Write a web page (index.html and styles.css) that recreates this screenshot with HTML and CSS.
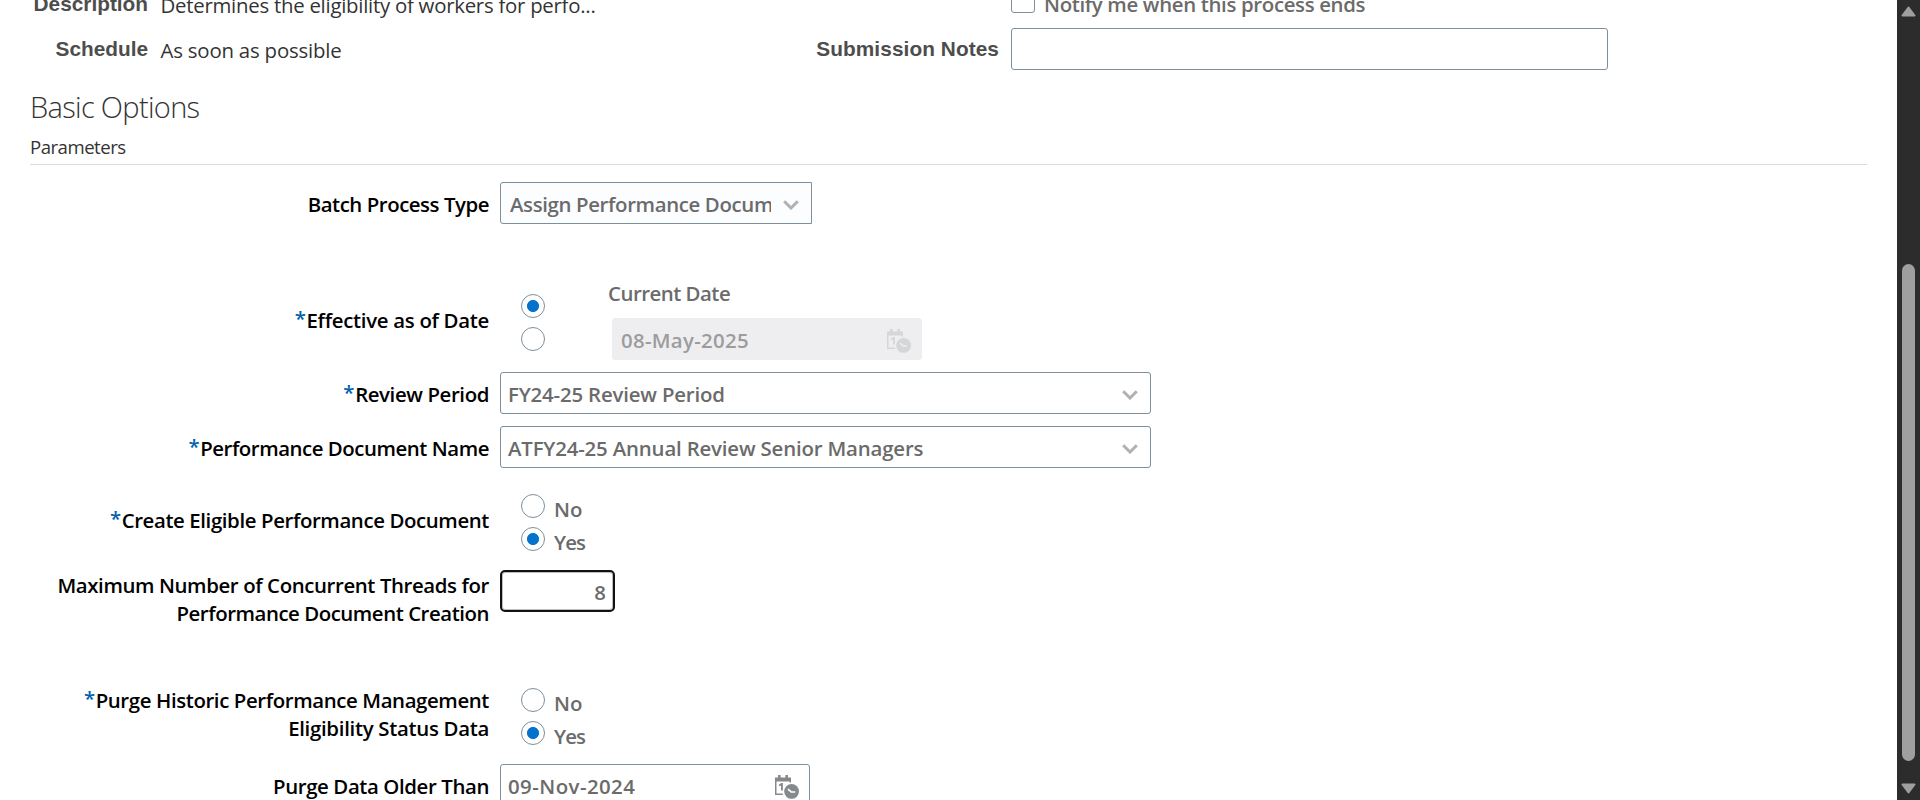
FILE: index.html
```html
<!DOCTYPE html>
<html lang="en">
<head>
<meta charset="utf-8">
<title>Process Details</title>
<link rel="stylesheet" href="styles.css">
</head>
<body>
<svg width="0" height="0" class="defs">
  <symbol id="chevron" viewBox="0 0 16 10"><path d="M1.2 1.2 8 8 14.8 1.2" fill="none" stroke="currentColor" stroke-width="3"/></symbol>
  <symbol id="calendar" viewBox="0 0 24 24">
    <path d="M0 20V2.5h3V0h2.6v2.5h4.8V0H13v2.5h3v5h-1.5V6.6H1.5v11.8h6.3V20z" fill="currentColor"/>
    <path d="M4 9.6 6.4 8h1.5v7.6H6v-5.2l-2 .9z" fill="currentColor"/>
    <circle cx="16.6" cy="16.4" r="7.4" fill="currentColor"/>
    <path class="hands" d="M13 14.2 16.2 16.8l4 .2" fill="none" stroke-width="1.7"/>
  </symbol>
</svg>
<div class="window">
  <main class="page">
    <section class="summary">
      <div class="summary-row first">
        <div class="key">Description</div>
        <div class="value">Determines the eligibility of workers for perfo...</div>
        <div class="key"></div>
        <div class="notify"><span class="checkbox"></span><span class="notify-text">Notify me when this process ends</span></div>
      </div>
      <div class="summary-row">
        <div class="key">Schedule</div>
        <div class="value soon">As soon as possible</div>
        <div class="key notes-key">Submission Notes</div>
        <div class="field notes"></div>
      </div>
    </section>
    <h2 class="heading">Basic Options</h2>
    <div class="subheading">Parameters</div>
    <section class="form">
      <div class="row batch">
        <div class="label tight">Batch Process Type</div>
        <div class="field select batch-select"><span class="clip">Assign Performance Document</span><svg class="chev"><use href="#chevron"/></svg></div>
      </div>
      <div class="row effective">
        <div class="label loose"><b>*</b>Effective as of Date</div>
        <div class="radios"><span class="radio on"></span><span class="radio"></span></div>
        <div class="date-group">
          <div class="current">Current Date</div>
          <div class="field date disabled"><span>08-May-2025</span><svg class="cal"><use href="#calendar"/></svg></div>
        </div>
      </div>
      <div class="row review">
        <div class="label"><b>*</b>Review Period</div>
        <div class="field select wide"><span>FY24-25 Review Period</span><svg class="chev"><use href="#chevron"/></svg></div>
      </div>
      <div class="row document">
        <div class="label tight"><b>*</b>Performance Document Name</div>
        <div class="field select wide"><span>ATFY24-25 Annual Review Senior Managers</span><svg class="chev"><use href="#chevron"/></svg></div>
      </div>
      <div class="row create">
        <div class="label"><b>*</b>Create Eligible Performance Document</div>
        <div class="radios">
          <div class="option"><span class="radio"></span><span>No</span></div>
          <div class="option yes"><span class="radio on"></span><span>Yes</span></div>
        </div>
      </div>
      <div class="row threads">
        <div class="label">Maximum Number of Concurrent Threads for<br><span class="tight">Performance Document Creation</span></div>
        <div class="field number">8</div>
      </div>
      <div class="row purge">
        <div class="label"><b>*</b>Purge Historic Performance Management<br><span class="loose">Eligibility Status Data</span></div>
        <div class="radios">
          <div class="option"><span class="radio"></span><span>No</span></div>
          <div class="option yes"><span class="radio on"></span><span>Yes</span></div>
        </div>
      </div>
      <div class="row older">
        <div class="label">Purge Data Older Than</div>
        <div class="field date"><span>09-Nov-2024</span><svg class="cal"><use href="#calendar"/></svg></div>
      </div>
    </section>
  </main>
  <aside class="scrollbar">
    <svg class="arrow up" viewBox="0 0 15 11"><path d="M7.5 1.5 13.5 9.5H1.5z"/></svg>
    <div class="thumb"></div>
    <svg class="arrow" viewBox="0 0 15 11"><path d="M7.5 9.5 13.5 1.5H1.5z"/></svg>
  </aside>
</div>
</body>
</html>
```
FILE: styles.css
```css
* { box-sizing: border-box; }
html, body { margin: 0; height: 100%; overflow: hidden; background: #fff; }
body { font-family: "Open Sans", "Noto Sans", sans-serif; font-size: 20.4px; line-height: 28px; color: #6b6b6b; font-weight: 600; }
.defs { display: block; height: 0; }
.window { display: flex; height: 800px; overflow: hidden; }
.page { width: 1897px; height: 820px; margin-top: -20px; white-space: nowrap; }

.summary-row { display: grid; grid-template-columns: 148px 668px 183px 1fr; height: 42px; }
.summary-row.first { height: 48px; }
.key { padding-top: 9px; text-align: right; font: bold 20.8px/24px "Liberation Sans", Arial, sans-serif; color: #4d4d4d; }
.notes-key { letter-spacing: .08px; }
.first .key { padding-top: 12px; }
.value { padding: 8px 0 0 12.5px; font-weight: 400; color: #333; letter-spacing: -.26px; }
.soon { letter-spacing: -.2px; }
.first .value { padding-top: 11px; }
.notify { display: flex; padding: 9px 0 0 12px; gap: 9px; letter-spacing: -.34px; }
.notify-text { padding-top: 1px; }
.checkbox { width: 24px; height: 24px; border: 1px solid #7c8f9b; border-radius: 3px; }
.notes { width: 597px; margin-left: 12px; }

.heading { margin: 17px 0 0 30px; font-size: 29px; line-height: 40px; font-weight: 300; color: #333; letter-spacing: -.68px; }
.subheading { margin-left: 30px; width: 1837px; height: 38px; padding-top: 7px; border-bottom: 1px solid #d5dde6; font-size: 18.6px; line-height: 26px; font-weight: 400; color: #333; letter-spacing: -.5px; }

.form { padding-top: 17px; }
.row { display: flex; align-items: flex-start; }
.label { width: 489px; margin-right: 11px; padding-top: 8px; text-align: right; color: #000; letter-spacing: -.39px; }
.label b { color: #0063af; font-weight: 600; line-height: 0; vertical-align: 2px; margin-right: 1px; }
.loose { letter-spacing: -.3px; }
.tight { letter-spacing: -.45px; }
.batch { height: 112px; }
.effective { height: 78px; }
.effective .label, .create .label { padding-top: 12px; }
.review { height: 54px; }
.document { height: 68px; }
.create { height: 76px; }
.threads { height: 118px; }
.threads .label { padding-top: 1px; }
.purge { height: 76px; }
.purge .label { padding-top: 0; margin-top: -2px; }

.field { display: flex; height: 42px; padding: 7px 10px 0 7px; border: 1px solid #7c8f9b; border-radius: 3px; background: #fff; }
.select { justify-content: space-between; }
.chev { width: 16px; height: 10px; margin: 10px 2px 0 0; color: #b0b1b3; }
.batch-select { width: 312px; padding-left: 9px; border-radius: 3px 0 0 3px; background: #fbfdff; }
.clip { width: 261px; overflow: hidden; letter-spacing: -.36px; }
.wide { width: 651px; letter-spacing: -.17px; }
.date { width: 310px; justify-content: space-between; letter-spacing: .45px; }
.disabled { margin: 11px 0 0 4px; border-color: #eeeef0; background: #eeeef0; color: #9c9c9e; padding-left: 8px; letter-spacing: .3px; }
.cal { width: 24px; height: 24px; margin-top: 3px; color: #85898d; stroke: #fff; }
.hands { stroke: inherit; }
.disabled .cal { color: #d5d6d8; stroke: #eeeef0; }
#calendar path:not(.hands), #calendar circle { stroke: none; }
.number { width: 115px; border: 2px solid #111; border-radius: 5px; justify-content: flex-end; padding: 6px 7px 0 0; box-shadow: inset 0 0 0 1px #b9bdc0; }

.radios { display: flex; flex-direction: column; gap: 9px; padding-left: 21px; }
.radio { display: block; width: 24px; height: 24px; border: 1px solid #7c8f9b; border-radius: 50%; background: #fff; }
.radio.on { background: radial-gradient(circle, #0572ce 5.6px, #fff 6.4px); }
.option { display: flex; gap: 9px; height: 24px; line-height: 30px; }
.yes { letter-spacing: -.9px; }
.date-group { margin: -15px 0 0 63px; }
.current { letter-spacing: -.5px; }

.scrollbar { width: 23px; height: 800px; background: #2c2c2c; display: flex; flex-direction: column; align-items: center; padding: 6px 0 4px; }
.arrow { width: 15px; height: 11px; fill: #9f9f9f; stroke: #9f9f9f; stroke-width: 2; stroke-linejoin: round; }
.up { margin-bottom: 247px; }
.thumb { width: 13px; height: 497px; margin-bottom: 22px; border-radius: 7px; background: #9f9f9f; }
```
